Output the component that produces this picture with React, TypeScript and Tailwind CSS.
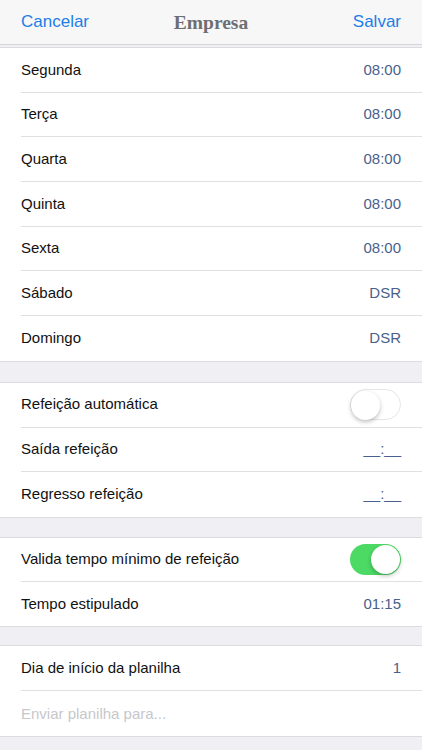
import React from "react";

const font = { fontFamily: '"Liberation Sans", Arial, sans-serif' };

function Row({ label, value, last, children, muted, h }: { label: string; value?: string; last?: boolean; children?: React.ReactNode; muted?: boolean; h: string }) {
  return (
    <div className="pl-[21px] bg-white">
      <div className={`${h} flex items-center justify-between pr-[21px] ${last ? "" : "border-b border-[#e0e0e4]"}`}>
        <span className={`text-[15px] ${muted ? "text-[#c7c7cc]" : "text-[#111]"}`}>{label}</span>
        {value !== undefined && <span className="text-[15px] text-[#4a5f8c]">{value}</span>}
        {children}
      </div>
    </div>
  );
}

function Switch({ on }: { on: boolean }) {
  return (
    <div className={`relative w-[51px] h-[31px] rounded-full ${on ? "bg-[#4cd964]" : "bg-white border border-[#e5e5ea]"}`}>
      <div className={`absolute top-[1px] ${on ? "right-[1px]" : "left-[0px]"} w-[29px] h-[29px] rounded-full bg-white shadow-[0_2px_4px_rgba(0,0,0,0.25)]`} />
    </div>
  );
}

function Section({ children }: { children: React.ReactNode }) {
  return <div className="border-y border-[#dcdce0] bg-white">{children}</div>;
}

export default function App() {
  const h1 = "h-[44.7px]";
  const h3 = "h-[44px]";
  const h4 = "h-[45px]";
  return (
    <div className="w-[422px] h-[750px] bg-[#efeff4] overflow-hidden" style={font}>
      <div className="h-[45px] bg-[#f7f7f8] border-b border-[#d5d5d9] grid grid-cols-[1fr_auto_1fr] items-center px-[21px]">
        <span className="text-[17px] text-[#1c7ee6] justify-self-start">Cancelar</span>
        <span className="text-[19.5px] font-bold text-[#6d6e72] pt-[1px]" style={{ fontFamily: '"Liberation Serif", serif' }}>Empresa</span>
        <span className="text-[17px] text-[#1c7ee6] justify-self-end">Salvar</span>
      </div>
      <div className="h-[2px]" />
      <Section>
        <Row h={h1} label="Segunda" value="08:00" />
        <Row h={h1} label="Terça" value="08:00" />
        <Row h={h1} label="Quarta" value="08:00" />
        <Row h={h1} label="Quinta" value="08:00" />
        <Row h={h1} label="Sexta" value="08:00" />
        <Row h={h1} label="Sábado" value="DSR" />
        <Row h={h1} label="Domingo" value="DSR" last />
      </Section>
      <div className="h-[20px]" />
      <Section>
        <Row h={h1} label="Refeição automática"><Switch on={false} /></Row>
        <Row h={h1} label="Saída refeição" value="__:__" />
        <Row h={h1} label="Regresso refeição" value="__:__" last />
      </Section>
      <div className="h-[19px]" />
      <Section>
        <Row h={h3} label="Valida tempo mínimo de refeição"><Switch on={true} /></Row>
        <Row h={h3} label="Tempo estipulado" value="01:15" last />
      </Section>
      <div className="h-[18.5px]" />
      <Section>
        <Row h={h4} label="Dia de início da planilha" value="1" />
        <Row h={h4} label="Enviar planilha para..." muted last />
      </Section>
    </div>
  );
}
